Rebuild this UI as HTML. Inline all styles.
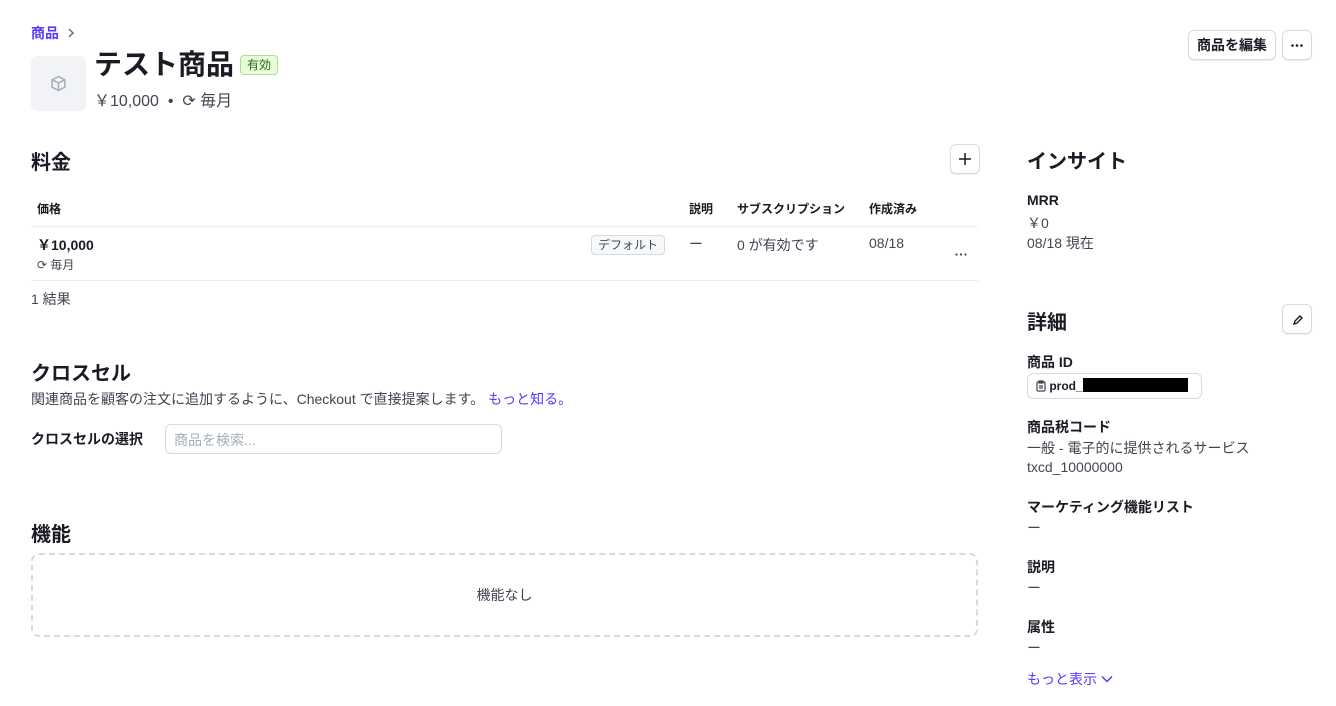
<!DOCTYPE html>
<html><head><meta charset="utf-8"><style>
*{box-sizing:border-box;margin:0;padding:0}
body{width:1336px;height:706px;background:#fff;font-family:"Liberation Sans","Noto Sans CJK JP",sans-serif;color:#1a1b25;position:relative;overflow:hidden}
.a{position:absolute;white-space:nowrap}
.h2{font-size:20px;font-weight:bold}
.s{font-size:14px;color:#414552}
.b{font-size:13px;font-weight:bold}
.btn{position:absolute;border:1px solid #d5dbe1;border-radius:6px;background:#fff;box-shadow:0 1px 1px rgba(0,0,0,.08)}
.line{position:absolute;height:1px;background:#ebeef1}
</style></head><body>
<div class="a" style="left:31px;top:23px;font-size:14px;font-weight:bold;color:#533afd">商品</div>
<svg class="a" style="left:67px;top:28px" width="8" height="10" viewBox="0 0 8 10" fill="none" stroke="#687385" stroke-width="1.5"><path d="M2 1l4 4-4 4"/></svg>
<div class="a" style="left:31px;top:56px;width:55px;height:55px;background:#f2f3f6;border-radius:6px"></div>
<svg class="a" style="left:50px;top:75px" width="17" height="17" viewBox="0 0 16 16" fill="none" stroke="#a3acba" stroke-width="1.4"><path d="M8 1.5l6 3v7l-6 3-6-3v-7z M2 4.5l6 3 6-3 M8 7.5v7"/></svg>
<div class="a" style="left:94px;top:43px;font-size:28px;font-weight:bold">テスト商品</div>
<div class="a" style="left:240px;top:55px;height:20px;padding:0 6px;border:1px solid #a8e38a;background:#ebfbe0;border-radius:4px;font-size:12px;line-height:18px;color:#217005">有効</div>
<div class="a" style="left:94px;top:87px;font-size:16px;color:#414552">￥10,000 &nbsp;•&nbsp; ⟳ 毎月</div>
<div class="btn" style="left:1188px;top:30px;width:88px;height:30px;font-size:14px;font-weight:bold;text-align:center;line-height:28px">商品を編集</div>
<div class="btn" style="left:1282px;top:30px;width:30px;height:30px"><svg style="position:absolute;left:8px;top:13px" width="12" height="3"><circle cx="1.5" cy="1.5" r="1.3" fill="#1a1b25"/><circle cx="6" cy="1.5" r="1.3" fill="#1a1b25"/><circle cx="10.5" cy="1.5" r="1.3" fill="#1a1b25"/></svg></div>

<div class="a h2" style="left:31px;top:146px">料金</div>
<div class="btn" style="left:950px;top:144px;width:30px;height:30px"><svg style="position:absolute;left:8px;top:8px" width="12" height="12" stroke="#1a1b25" stroke-width="1.5"><path d="M6 0v12M0 6h12"/></svg></div>
<div class="a b" style="left:37px;top:200px;font-size:12px">価格</div>
<div class="a b" style="left:689px;top:200px;font-size:12px">説明</div>
<div class="a b" style="left:737px;top:200px;font-size:12px">サブスクリプション</div>
<div class="a b" style="left:869px;top:200px;font-size:12px">作成済み</div>
<div class="line" style="left:31px;top:226px;width:947px"></div>
<div class="a" style="left:37px;top:235px;font-size:14px;font-weight:bold">￥10,000</div>
<div class="a" style="left:37px;top:256px;font-size:12px;color:#414552">⟳ 毎月</div>
<div class="a" style="left:591px;top:235px;height:20px;padding:0 6px;border:1px solid #d5dbe1;background:#f6f8fa;border-radius:4px;font-size:12px;line-height:18px;color:#414552">デフォルト</div>
<div class="a s" style="left:689px;top:234px">ー</div>
<div class="a s" style="left:737px;top:235px">0 が有効です</div>
<div class="a s" style="left:869px;top:235px">08/18</div>
<svg class="a" style="left:955px;top:253px" width="12" height="3"><circle cx="1.5" cy="1.5" r="1.1" fill="#414552"/><circle cx="6" cy="1.5" r="1.1" fill="#414552"/><circle cx="10.5" cy="1.5" r="1.1" fill="#414552"/></svg>
<div class="line" style="left:31px;top:280px;width:947px"></div>
<div class="a s" style="left:31px;top:289px">1 結果</div>

<div class="a h2" style="left:31px;top:357px">クロスセル</div>
<div class="a s" style="left:31px;top:389px">関連商品を顧客の注文に追加するように、Checkout で直接提案します。 <span style="color:#533afd">もっと知る。</span></div>
<div class="a b" style="left:31px;top:429px;font-size:14px">クロスセルの選択</div>
<div class="a" style="left:165px;top:424px;width:337px;height:30px;border:1px solid #d5dbe1;border-radius:6px;font-size:14px;color:#a3acba;padding:5px 8px">商品を検索...</div>

<div class="a h2" style="left:31px;top:518px">機能</div>
<div class="a" style="left:31px;top:553px;width:947px;height:84px;border:2px dashed #d5dbe1;border-radius:8px;text-align:center;line-height:80px;font-size:14px;color:#414552">機能なし</div>

<div class="a h2" style="left:1027px;top:145px">インサイト</div>
<div class="a b" style="left:1027px;top:192px;font-size:14px">MRR</div>
<div class="a s" style="left:1027px;top:213px">￥0</div>
<div class="a s" style="left:1027px;top:233px">08/18 現在</div>
<div class="a h2" style="left:1027px;top:306px">詳細</div>
<div class="btn" style="left:1282px;top:304px;width:30px;height:30px"><svg style="position:absolute;left:9px;top:9px" width="12" height="12" viewBox="0 0 12 12" fill="none" stroke="#1a1b25" stroke-width="1.4"><path d="M2 10l1-3 5-5 2 2-5 5z"/></svg></div>
<div class="a b" style="left:1027px;top:352px;font-size:14px">商品 ID</div>
<div class="a" style="left:1027px;top:373px;width:175px;height:26px;border:1px solid #d5dbe1;border-radius:6px;font-size:12px;font-weight:bold;padding:4px 8px"><svg width="10" height="12" viewBox="0 0 10 12" fill="none" stroke="#414552" stroke-width="1.2" style="vertical-align:-2px"><rect x="1" y="2" width="8" height="9" rx="1"/><path d="M3 1h4v2H3zM3 6h4M3 8h4"/></svg> prod_<span style="display:inline-block;width:105px;height:14px;background:#000;vertical-align:-2px"></span></div>
<div class="a b" style="left:1027px;top:417px;font-size:14px">商品税コード</div>
<div class="a s" style="left:1027px;top:438px">一般 - 電子的に提供されるサービス</div>
<div class="a s" style="left:1027px;top:459px">txcd_10000000</div>
<div class="a b" style="left:1027px;top:497px;font-size:14px">マーケティング機能リスト</div>
<div class="a s" style="left:1027px;top:518px">ー</div>
<div class="a b" style="left:1027px;top:557px;font-size:14px">説明</div>
<div class="a s" style="left:1027px;top:578px">ー</div>
<div class="a b" style="left:1027px;top:617px;font-size:14px">属性</div>
<div class="a s" style="left:1027px;top:638px">ー</div>
<div class="a" style="left:1027px;top:669px;font-size:14px;color:#533afd">もっと表示 <svg width="12" height="8" viewBox="0 0 12 8" fill="none" stroke="#533afd" stroke-width="1.5" style="vertical-align:1px"><path d="M1 1.5l5 5 5-5"/></svg></div>
</body></html>
